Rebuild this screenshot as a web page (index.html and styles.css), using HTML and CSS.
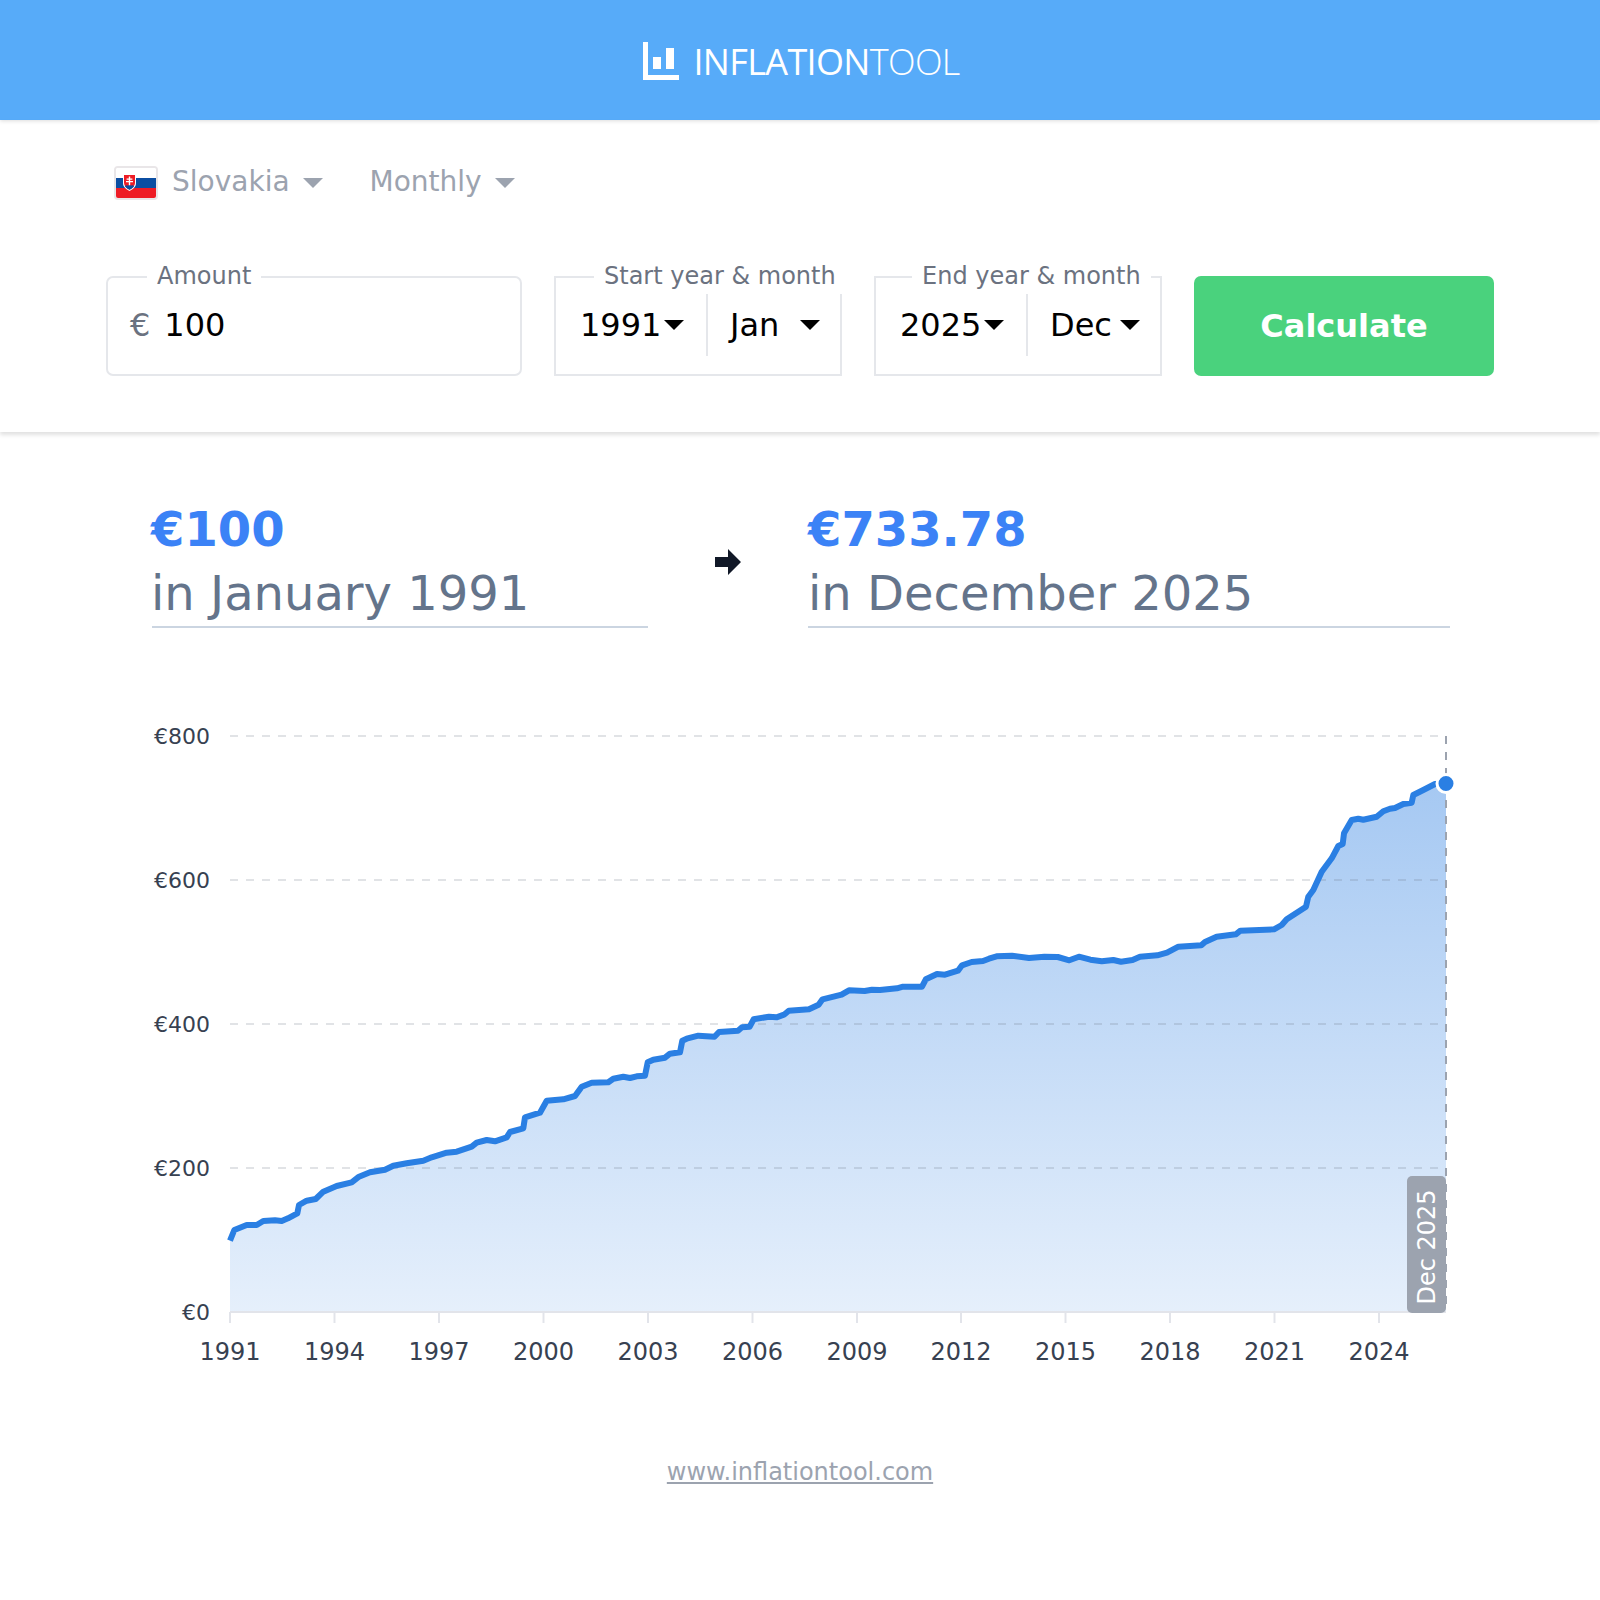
FILE: index.html
```html
<!DOCTYPE html>
<html lang="en">
<head>
  <meta charset="UTF-8">
  <title>Inflation Tool</title>
  <link rel="stylesheet" href="styles.css">
</head>
<body>
  <header class="topbar">
    <svg class="logo-icon" viewBox="0 0 36 38" width="36" height="38">
      <path fill="#fff" d="M0 0h5v33h31v5H0z"/>
      <rect fill="#fff" x="10" y="15" width="8" height="12"/>
      <rect fill="#fff" x="23" y="6" width="8" height="21"/>
    </svg>
    <div class="logo-text">INFLATION<span class="logo-light">TOOL</span></div>
  </header>

  <section class="panel">
    <div class="filters">
      <div class="filter country">
        <svg class="flag" viewBox="0 0 40 30" width="40" height="30">
          <rect width="40" height="10" fill="#fff"/>
          <rect y="10" width="40" height="10" fill="#0b4ea2"/>
          <rect y="20" width="40" height="10" fill="#ee1c25"/>
          <path d="M7 6h13v9c0 4-3 6-6.500 8C10 21 7 19 7 15z" fill="#fff"/>
          <path d="M8 7h11v8c0 3-2.500 5-5.500 6.800C10.500 20 8 18 8 15z" fill="#ee1c25"/>
          <path d="M8.900 18.300c1-1.300 2-1.300 2.800-.6.700-1 3-1 3.700 0 .8-.7 1.800-.7 2.700.6-1 1.500-2.600 2.500-4.600 3.500-2-1-3.600-2-4.600-3.500z" fill="#0b4ea2"/>
          <path d="M12.800 8.500h1.400v2h2.200v1.200h-2.200v1.300h2.800v1.200h-2.800v3h-1.400v-3H10V13h2.800v-1.300h-2.200v-1.200h2.200z" fill="#fff"/>
        </svg>
        <span>Slovakia</span>
        <i class="caret caret-grey"></i>
      </div>
      <div class="filter">
        <span>Monthly</span>
        <i class="caret caret-grey"></i>
      </div>
    </div>

    <div class="form-row">
      <fieldset class="field amount">
        <legend>Amount</legend>
        <div class="amount-row"><span class="currency">€</span><span class="amount-value">100</span></div>
      </fieldset>

      <fieldset class="field date date-start">
        <legend>Start year &amp; month</legend>
        <div class="date-row">
          <div class="pick pick-year"><span>1991</span><i class="caret"></i></div>
          <div class="pick pick-month"><span>Jan</span><i class="caret"></i></div>
        </div>
      </fieldset>

      <fieldset class="field date date-end">
        <legend>End year &amp; month</legend>
        <div class="date-row">
          <div class="pick pick-year"><span>2025</span><i class="caret"></i></div>
          <div class="pick pick-month"><span>Dec</span><i class="caret"></i></div>
        </div>
      </fieldset>

      <button class="calc">Calculate</button>
    </div>
  </section>

  <section class="summary">
    <div class="sum-col sum-from">
      <div class="sum-value">€100</div>
      <div class="sum-date">in January 1991</div>
    </div>
    <div class="sum-arrow">
      <svg viewBox="0 0 26 26" width="26" height="26"><path fill="#111827" d="M0 8h13V0l13 13-13 13v-8H0z"/></svg>
    </div>
    <div class="sum-col">
      <div class="sum-value">€733.78</div>
      <div class="sum-date">in December 2025</div>
    </div>
  </section>

  <svg class="chart" viewBox="0 700 1600 700" width="1600" height="700">
    <defs>
      <linearGradient id="areaFill" gradientUnits="userSpaceOnUse" x1="0" y1="784" x2="0" y2="1312">
        <stop offset="0" stop-color="#2a7de1" stop-opacity="0.42"/>
        <stop offset="1" stop-color="#2a7de1" stop-opacity="0.12"/>
      </linearGradient>
    </defs>

    <path fill="url(#areaFill)" d="M230 1312V1240.700L234.300 1230 246.700 1225 256.700 1225 263.300 1221 275 1220.300 281.700 1221 288 1218.300 297.300 1213.300 299 1205 306.700 1200.700 315.700 1199 323.300 1191.700 336.700 1186 351.700 1182.300 359 1176.700 370 1172.300 385 1169.700 393.300 1165.700 406.700 1163.300 423.300 1160.700 431.700 1157.300 446.700 1152.700 456.700 1151.700 471.700 1146.700 476.700 1142.700 486.700 1140 495 1141.300 506.700 1137.300 510 1132 523.300 1128.300 525 1117.300 540 1112.700 546.700 1100.700 563.300 1099.300 575 1096 581.700 1086.700 591.700 1082.700 608.300 1082.300 613.300 1078.700 623.300 1076.700 630 1078 636.700 1076.300 645 1075.700 647.700 1062.300 653.300 1059.700 665 1057.700 670 1053.700 680 1052.300 682.300 1040.700 686.700 1038.700 698.300 1035.700 714.500 1036.700 719 1032 738 1030.700 742 1027.300 749.700 1026.700 753.600 1019.300 769 1016.700 776.500 1017.300 784 1014.700 788.800 1010.700 809 1009.300 818.600 1004.700 822.500 999.300 841.600 994.700 849 990.300 864.600 991 872 989.700 880 990 897 988.300 903 986.700 922 986.700 925.800 979.300 937 974 945 974.700 958 970.700 962 965.300 971.700 962 983 961 989 958.700 996.600 956.300 1012 955.700 1029 958 1044.400 956.700 1057.800 957 1069.300 960.300 1078.900 956.700 1090.400 959.700 1101.800 961.300 1113.300 960 1121 961.700 1132.500 960 1140 956.700 1157.300 955.300 1167 952.700 1178.400 946.700 1201.300 945.300 1205 942 1216.600 936.700 1235.800 934.300 1240.400 930.700 1274 929.300 1281.700 925 1286.700 919.300 1306 906.700 1308.300 896.700 1313.300 890 1321.700 871.700 1331.700 858.300 1338.300 846 1342.700 844 1344 833.300 1351.700 820 1358.300 818.700 1363.300 819.700 1376.700 816.700 1383.300 811.300 1390 808.700 1395 808 1403.300 804 1411.700 802.700 1413.300 795 1423.300 790 1435 784 1446 783.300V1312z"/>

    <g class="grid">
      <line x1="230" y1="736" x2="1446" y2="736"/>
      <line x1="230" y1="880" x2="1446" y2="880"/>
      <line x1="230" y1="1024" x2="1446" y2="1024"/>
      <line x1="230" y1="1168" x2="1446" y2="1168"/>
    </g>

    <g class="axis">
      <line x1="230" y1="1312" x2="1446" y2="1312"/>
      <line x1="230" y1="1312" x2="230" y2="1323"/>
      <line x1="334.500" y1="1312" x2="334.500" y2="1323"/>
      <line x1="439" y1="1312" x2="439" y2="1323"/>
      <line x1="543.500" y1="1312" x2="543.500" y2="1323"/>
      <line x1="648" y1="1312" x2="648" y2="1323"/>
      <line x1="752.500" y1="1312" x2="752.500" y2="1323"/>
      <line x1="857" y1="1312" x2="857" y2="1323"/>
      <line x1="961" y1="1312" x2="961" y2="1323"/>
      <line x1="1065.500" y1="1312" x2="1065.500" y2="1323"/>
      <line x1="1170" y1="1312" x2="1170" y2="1323"/>
      <line x1="1274.500" y1="1312" x2="1274.500" y2="1323"/>
      <line x1="1379" y1="1312" x2="1379" y2="1323"/>
    </g>

    <g class="y-labels">
      <text x="210" y="744">€800</text>
      <text x="210" y="888">€600</text>
      <text x="210" y="1032">€400</text>
      <text x="210" y="1176">€200</text>
      <text x="210" y="1320">€0</text>
    </g>

    <g class="x-labels">
      <text x="230" y="1360">1991</text>
      <text x="334.500" y="1360">1994</text>
      <text x="439" y="1360">1997</text>
      <text x="543.500" y="1360">2000</text>
      <text x="648" y="1360">2003</text>
      <text x="752.500" y="1360">2006</text>
      <text x="857" y="1360">2009</text>
      <text x="961" y="1360">2012</text>
      <text x="1065.500" y="1360">2015</text>
      <text x="1170" y="1360">2018</text>
      <text x="1274.500" y="1360">2021</text>
      <text x="1379" y="1360">2024</text>
    </g>

    <rect class="badge" x="1407" y="1176" width="39" height="137" rx="5"/>
    <line class="marker" x1="1446" y1="736" x2="1446" y2="1312"/>
    <text class="badge-text" transform="translate(1435 1247) rotate(-90)">Dec 2025</text>

    <path class="line" d="M230 1240.700L234.300 1230 246.700 1225 256.700 1225 263.300 1221 275 1220.300 281.700 1221 288 1218.300 297.300 1213.300 299 1205 306.700 1200.700 315.700 1199 323.300 1191.700 336.700 1186 351.700 1182.300 359 1176.700 370 1172.300 385 1169.700 393.300 1165.700 406.700 1163.300 423.300 1160.700 431.700 1157.300 446.700 1152.700 456.700 1151.700 471.700 1146.700 476.700 1142.700 486.700 1140 495 1141.300 506.700 1137.300 510 1132 523.300 1128.300 525 1117.300 540 1112.700 546.700 1100.700 563.300 1099.300 575 1096 581.700 1086.700 591.700 1082.700 608.300 1082.300 613.300 1078.700 623.300 1076.700 630 1078 636.700 1076.300 645 1075.700 647.700 1062.300 653.300 1059.700 665 1057.700 670 1053.700 680 1052.300 682.300 1040.700 686.700 1038.700 698.300 1035.700 714.500 1036.700 719 1032 738 1030.700 742 1027.300 749.700 1026.700 753.600 1019.300 769 1016.700 776.500 1017.300 784 1014.700 788.800 1010.700 809 1009.300 818.600 1004.700 822.500 999.300 841.600 994.700 849 990.300 864.600 991 872 989.700 880 990 897 988.300 903 986.700 922 986.700 925.800 979.300 937 974 945 974.700 958 970.700 962 965.300 971.700 962 983 961 989 958.700 996.600 956.300 1012 955.700 1029 958 1044.400 956.700 1057.800 957 1069.300 960.300 1078.900 956.700 1090.400 959.700 1101.800 961.300 1113.300 960 1121 961.700 1132.500 960 1140 956.700 1157.300 955.300 1167 952.700 1178.400 946.700 1201.300 945.300 1205 942 1216.600 936.700 1235.800 934.300 1240.400 930.700 1274 929.300 1281.700 925 1286.700 919.300 1306 906.700 1308.300 896.700 1313.300 890 1321.700 871.700 1331.700 858.300 1338.300 846 1342.700 844 1344 833.300 1351.700 820 1358.300 818.700 1363.300 819.700 1376.700 816.700 1383.300 811.300 1390 808.700 1395 808 1403.300 804 1411.700 802.700 1413.300 795 1423.300 790 1435 784 1446 783.300"/>
    <circle class="dot" cx="1446" cy="783.500" r="9"/>
  </svg>

  <footer class="foot"><a href="#">www.inflationtool.com</a></footer>
</body>
</html>
```

FILE: styles.css
```css
body {
  margin: 0;
  background: #fff;
  font-family: "DejaVu Sans", sans-serif;
  color: #000;
}

.topbar {
  height: 120px;
  background: #57abf9;
  display: flex;
  align-items: center;
  justify-content: center;
  gap: 14px;
  padding-left: 3px;
  box-shadow: 0 1px 4px rgba(0,0,0,0.14);
}
.logo-icon { display: block; margin-top: 2px; }
.logo-text {
  font-family: "Open Sans", sans-serif;
  font-size: 36px;
  font-weight: 500;
  letter-spacing: -0.65px;
  line-height: 40px;
  color: #fff;
  margin-top: 4px;
}
.logo-light { font-weight: 300; }

.panel {
  height: 312px;
  box-sizing: border-box;
  padding: 0 106px;
  box-shadow: 0 3px 4px rgba(0,0,0,0.12);
}

.filters {
  display: flex;
  gap: 47px;
  height: 140px;
  padding: 44px 0 0 8px;
  box-sizing: border-box;
}
.filter {
  display: flex;
  align-items: center;
  height: 34px;
  font-size: 28px;
  color: #9ca3af;
}
.filter span { margin-right: 13px; }
.flag {
  display: block;
  box-sizing: content-box;
  border: 2px solid #e9e6e8;
  border-radius: 4px;
  margin: 4px 14px 0 0;
}

.caret {
  display: block;
  width: 0;
  height: 0;
  border-left: 10px solid transparent;
  border-right: 10px solid transparent;
  border-top: 10px solid #000;
}
.caret-grey { border-top-color: #9ca3af; margin-top: 4px; }

.form-row {
  display: flex;
  align-items: flex-end;
  gap: 32px;
}
.field {
  margin: 0;
  padding: 0 0 18px;
  border: 2px solid #e5e7eb;
  box-sizing: border-box;
  min-width: 0;
}
.field legend {
  margin-left: 39px;
  padding: 0 10px 2px;
  font-size: 24px;
  line-height: 32px;
  color: #6b7280;
  white-space: nowrap;
}
.amount { flex: 1; border-radius: 7px; }
.date { width: 288px; }
.date-start legend { margin-left: 38px; }
.date-end legend { margin-left: 36px; }

.amount-row {
  display: flex;
  align-items: center;
  height: 62px;
  padding-left: 22px;
  font-size: 32px;
}
.currency { color: #6b7280; margin-right: 14px; }

.date-row { display: flex; height: 62px; }
.pick {
  display: flex;
  align-items: center;
  justify-content: space-between;
  box-sizing: border-box;
  font-size: 32px;
}
.pick-year {
  width: 152px;
  padding: 0 22px 0 24px;
  border-right: 2px solid #e5e7eb;
}
.pick-month {
  flex: 1;
  padding: 0 20px 0 22px;
}

.calc {
  width: 300px;
  height: 100px;
  border: none;
  border-radius: 7px;
  background: #4ad27d;
  color: #fff;
  font-family: inherit;
  font-size: 32px;
  font-weight: bold;
}

.summary {
  display: grid;
  grid-template-columns: 496px 160px 642px;
  padding: 65px 0 0 152px;
  height: 197px;
  box-sizing: border-box;
}
.sum-col {
  height: 131px;
  box-sizing: border-box;
  border-bottom: 2px solid #cbd5e1;
}
.sum-from div { margin-left: -1px; }
.sum-value {
  font-size: 48px;
  font-weight: bold;
  line-height: 64px;
  color: #3b82f6;
}
.sum-date {
  font-size: 48px;
  line-height: 64px;
  color: #64748b;
}
.sum-arrow { display: flex; justify-content: center; padding-top: 52px; }

.chart { display: block; margin-top: 71px; }
.grid line { stroke: rgba(107,114,128,0.2); stroke-width: 2; stroke-dasharray: 8 8; }
.axis line { stroke: #e2e4ea; stroke-width: 2; }
.y-labels text { font-size: 22px; fill: #374151; text-anchor: end; }
.x-labels text { font-size: 24px; fill: #374151; text-anchor: middle; }
.line {
  fill: none;
  stroke: #2a7fe3;
  stroke-width: 6;
  stroke-linejoin: round;
}
.marker { stroke: #9ca3af; stroke-width: 2; stroke-dasharray: 8 8; }
.dot { fill: #2a7fe3; stroke: #fff; stroke-width: 3; }
.badge { fill: #9ca3af; }
.badge-text { fill: #fff; font-size: 24px; text-anchor: middle; }

.foot {
  text-align: center;
  margin-top: 58px;
  font-size: 24px;
  line-height: 28px;
}
.foot a { color: #9ca3af; }
```
